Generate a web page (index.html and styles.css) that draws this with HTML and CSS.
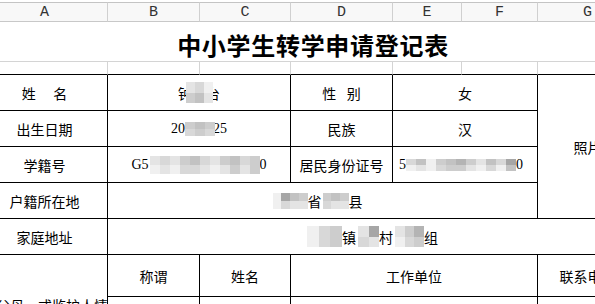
FILE: index.html
```html
<!DOCTYPE html>
<html lang="zh-CN">
<head>
    <meta charset="UTF-8">
    <title>中小学生转学申请登记表</title>
    <link rel="stylesheet" href="styles.css">
</head>
<body>
    <div class="sheet">
        <!-- column letters -->
        <div class="col-head">A</div>
        <div class="col-head">B</div>
        <div class="col-head">C</div>
        <div class="col-head">D</div>
        <div class="col-head">E</div>
        <div class="col-head">F</div>
        <div class="col-head">G</div>

        <div class="title">中小学生转学申请登记表</div>

        <div class="gap"></div>
        <div class="gap"></div>
        <div class="gap"></div>
        <div class="gap"></div>
        <div class="gap"></div>
        <div class="gap"></div>
        <div class="gap"></div>

        <!-- row 1 -->
        <div class="cell">姓　&nbsp;名</div>
        <div class="cell span2">钟<span class="mz mz-name"><i class="s1"></i><i class="s3"></i><i class="s2"></i><i class="s4"></i><i class="s0"></i><i class="s1"></i></span>台</div>
        <div class="cell">性&ensp;&nbsp;别</div>
        <div class="cell span2">女</div>
        <div class="cell photo">照片</div>

        <!-- row 2 -->
        <div class="cell">出生日期</div>
        <div class="cell span2">20<span class="mz mz-date"><i class="s3"></i><i class="s2"></i><i class="s4"></i><i class="s3"></i><i class="s3"></i><i class="s2"></i></span>25</div>
        <div class="cell">民族</div>
        <div class="cell span2">汉</div>

        <!-- row 3 -->
        <div class="cell">学籍号</div>
        <div class="cell span2">G5<span class="mz mz-reg"><i class="s1"></i><i class="s0"></i><i class="s2"></i><i class="s1"></i><i class="s1"></i><i class="s0"></i><i class="s3"></i><i class="s2"></i><i class="s4"></i><i class="s2"></i><i class="s2"></i><i class="s1"></i><i class="s1"></i><i class="s0"></i><i class="s3"></i><i class="s1"></i><i class="s4"></i><i class="s3"></i><i class="s2"></i><i class="s1"></i><i class="s3"></i><i class="s3"></i></span>0</div>
        <div class="cell">居民身份证号</div>
        <div class="cell span2 id-no">5<span class="mz mz-id"><i class="s2"></i><i class="s0"></i><i class="s4"></i><i class="s1"></i><i class="s0"></i><i class="s0"></i><i class="s3"></i><i class="s2"></i><i class="s4"></i><i class="s3"></i><i class="s5"></i><i class="s3"></i><i class="s3"></i><i class="s1"></i><i class="s1"></i><i class="s0"></i><i class="s4"></i><i class="s2"></i><i class="s2"></i><i class="s0"></i><i class="s6"></i><i class="s4"></i></span>0</div>

        <!-- row 4 -->
        <div class="cell">户籍所在地</div>
        <div class="cell span5 native">
            <span class="mz mz-prov"><i class="s0"></i><i class="s0"></i><i class="s6"></i><i class="s2"></i><i class="s4"></i><i class="s1"></i><i class="s3"></i><i class="s1"></i></span>省<span class="mz mz-county"><i class="s3"></i><i class="s2"></i><i class="s4"></i><i class="s1"></i><i class="s3"></i><i class="s1"></i></span>县
        </div>

        <!-- row 5 -->
        <div class="cell">家庭地址</div>
        <div class="cell span6">
            <span class="mz mz-town"><i class="s0"></i><i class="s0"></i><i class="s2"></i><i class="s2"></i><i class="s3"></i><i class="s3"></i></span>镇<span class="mz mz-village"><i class="s1"></i><i class="s2"></i><i class="s6"></i><i class="s1"></i></span>村<span class="mz mz-group"><i class="s1"></i><i class="s0"></i><i class="s3"></i><i class="s2"></i><i class="s5"></i><i class="s3"></i></span>组
        </div>

        <!-- row 6 / 7: family members -->
        <div class="cell family">父母　或监护人情况</div>
        <div class="cell">称谓</div>
        <div class="cell">姓名</div>
        <div class="cell span3">工作单位</div>
        <div class="cell">联系电话</div>

        <div class="cell"></div>
        <div class="cell"></div>
        <div class="cell span3"></div>
        <div class="cell"></div>
    </div>
</body>
</html>
```

FILE: styles.css
```css
html, body {
    overflow: hidden;
}
body {
    margin: 0;
    padding-top: 2px;
    background-color: #fff;
    color: #000;
    font-family: "Liberation Serif", "Noto Sans CJK SC", serif;
}
.sheet {
    display: grid;
    grid-template-columns: 126px 92px 91px 102px 69px 76px 100px;
    grid-template-rows: 20px 40px 13px repeat(5, 36px) 42px 42px;
    width: 656px;
    margin-left: -18px;
}
.sheet > div {
    box-sizing: border-box;
}
.col-head {
    display: flex;
    align-items: center;
    justify-content: center;
    background-color: #f8f8f8;
    border-top: 1px solid #c4c4c4;
    border-bottom: 1px solid #c8c8c8;
    border-right: 1px solid #d0d0d0;
    font-family: "Liberation Mono", monospace;
    font-size: 15px;
    color: #333;
}
.title {
    grid-column: 1 / -1;
    display: flex;
    align-items: flex-end;
    justify-content: center;
    padding: 0 0 1px 6px;
    border-bottom: 1px solid #d4d4d4;
    font-family: "Noto Sans CJK SC", sans-serif;
    font-size: 24px;
    font-weight: bold;
    letter-spacing: 0.7px;
    line-height: 1.3;
}
.gap {
    border-right: 1px solid #d4d4d4;
    border-bottom: 1px solid #000;
}
.cell {
    display: flex;
    align-items: center;
    justify-content: center;
    border-right: 1px solid #000;
    border-bottom: 1px solid #000;
    font-size: 14px;
    white-space: nowrap;
}
.span2 { grid-column: span 2; }
.span3 { grid-column: span 3; }
.span5 { grid-column: span 5; }
.span6 { grid-column: span 6; }
.photo {
    grid-row: span 4;
}
.id-no {
    padding-right: 8px;
}
.native {
    padding-right: 10px;
}
.family {
    grid-row: span 2;
    align-items: flex-start;
    justify-content: flex-start;
    padding: 40px 0 0 14px;
    overflow: hidden;
}

/* pixelated masks over private details */
.mz {
    position: relative;
    z-index: 1;
    display: grid;
    grid-auto-flow: column;
    grid-template-rows: 1fr 1fr;
    grid-auto-columns: 1fr;
}
.mz i { display: block; }
.s0 { background-color: #f0f0f0; }
.s1 { background-color: #e4e4e4; }
.s2 { background-color: #d8d8d8; }
.s3 { background-color: #cdcdcd; }
.s4 { background-color: #c2c2c2; }
.s5 { background-color: #b4b4b4; }
.s6 { background-color: #a6a6a6; }

.mz-name { width: 27px; height: 21px; margin: 0 -7px 0 -6px; }
.mz-date { width: 30px; height: 14px; margin: 0 -2px 0 0; }
.mz-reg { width: 110px; height: 18px; margin-left: 1px; }
.mz-id { width: 110px; height: 12px; }
.mz-prov { width: 35px; height: 16px; }
.mz-county { width: 26px; height: 16px; margin-left: 1px; }
.mz-town { width: 35px; height: 21px; }
.mz-village { width: 21px; height: 21px; margin-left: 2px; }
.mz-group { width: 29px; height: 21px; margin-left: 2px; }
```
